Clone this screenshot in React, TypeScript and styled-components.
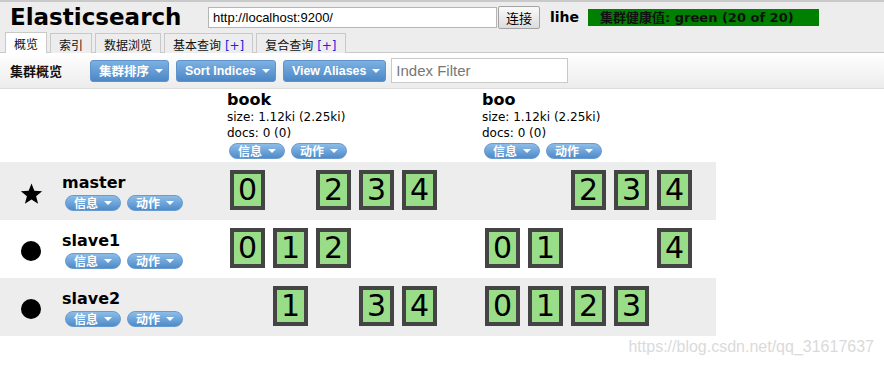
import styled, { createGlobalStyle } from "styled-components";

const GlobalStyle = createGlobalStyle`
	body {
		margin: 0;
		background: #fff;
		font-family: "DejaVu Sans", "Noto Sans CJK SC", sans-serif;
		font-size: 12px;
		color: #000;
	}
`;

const cjk = `"Noto Sans CJK SC", sans-serif`;

type Shards = (number | null)[];

const indices = [
	{ name: "book", size: "1.12ki (2.25ki)", docs: "0 (0)" },
	{ name: "boo", size: "1.12ki (2.25ki)", docs: "0 (0)" },
];

const nodes: { name: string; master: boolean; shards: Shards[] }[] = [
	{ name: "master", master: true, shards: [[0, null, 2, 3, 4], [null, null, 2, 3, 4]] },
	{ name: "slave1", master: false, shards: [[0, 1, 2, null, null], [0, 1, null, null, 4]] },
	{ name: "slave2", master: false, shards: [[null, 1, null, 3, 4], [0, 1, 2, 3, null]] },
];

const tabs = [
	{ label: "概览", active: true },
	{ label: "索引" },
	{ label: "数据浏览" },
	{ label: "基本查询", plus: true },
	{ label: "复合查询", plus: true },
];

const Caret = () => <Arrow />;

const Pill = ({ label }: { label: string }) => (
	<PillButton>
		{label}
		<Caret />
	</PillButton>
);

const Star = () => (
	<svg width="23" height="23" viewBox="0 0 24 24">
		<path
			d="M12 1.5l3 7.6 8.1.5-6.3 5.2 2.1 7.9L12 18.3l-6.9 4.4 2.1-7.9L.9 9.6 9 9.1z"
			fill="#000"
		/>
	</svg>
);

export default function App() {
	return (
		<Page>
			<GlobalStyle />
			<Header>
				<TopBar>
					<Title>Elasticsearch</Title>
					<UrlInput defaultValue="http://localhost:9200/" />
					<ConnectButton>连接</ConnectButton>
					<ClusterName>lihe</ClusterName>
					<Health>集群健康值: green (20 of 20)</Health>
				</TopBar>
				<Tabs>
					{tabs.map((t) => (
						<Tab key={t.label} $active={!!t.active}>
							{t.label}
							{t.plus && <Plus> [+]</Plus>}
						</Tab>
					))}
				</Tabs>
			</Header>
			<Toolbar>
				<ToolbarTitle>集群概览</ToolbarTitle>
				<Buttons>
					<ToolButton $cjk>
						集群排序
						<Caret />
					</ToolButton>
					<ToolButton>
						Sort Indices
						<Caret />
					</ToolButton>
					<ToolButton>
						View Aliases
						<Caret />
					</ToolButton>
				</Buttons>
				<FilterInput placeholder="Index Filter" />
			</Toolbar>
			<Overview>
				<HeadCell />
				{indices.map((idx) => (
					<HeadCell key={idx.name}>
						<IndexName>{idx.name}</IndexName>
						<Stat>size: {idx.size}</Stat>
						<Stat>docs: {idx.docs}</Stat>
						<PillRow>
							<Pill label="信息" />
							<Pill label="动作" />
						</PillRow>
					</HeadCell>
				))}
				{nodes.map((node, r) => (
					<Row key={node.name} $shaded={r % 2 === 0}>
						<NodeCell>
							<NodeIcon>{node.master ? <Star /> : <Dot />}</NodeIcon>
							<NodeInfo>
								<NodeName>{node.name}</NodeName>
								<PillRow $indent>
									<Pill label="信息" />
									<Pill label="动作" />
								</PillRow>
							</NodeInfo>
						</NodeCell>
						{node.shards.map((list, i) => (
							<ShardCell key={i}>
								{list.map((s, j) => (
									<Shard key={j} $empty={s === null}>
										{s ?? j}
									</Shard>
								))}
							</ShardCell>
						))}
					</Row>
				))}
			</Overview>
			<Watermark>https://blog.csdn.net/qq_31617637</Watermark>
		</Page>
	);
}

const Page = styled.div`
	position: relative;
	min-height: 366px;
`;

const Header = styled.div`
	background: #ededed;
	border-top: 2px solid #c9c9c9;
`;

const TopBar = styled.div`
	display: flex;
	align-items: center;
	height: 30px;
	padding-left: 10px;
`;

const Title = styled.h1`
	margin: 0 26px 0 0;
	width: 172px;
	font: bold 23px "DejaVu Sans", sans-serif;
	white-space: nowrap;
`;

const UrlInput = styled.input`
	box-sizing: border-box;
	width: 289px;
	height: 21px;
	margin: 0;
	padding: 0 4px;
	border: 1px solid #b5b5b5;
	background: #fff;
	font: 13px "Liberation Sans", sans-serif;
	color: #000;
	outline: none;
`;

const ConnectButton = styled.button`
	box-sizing: border-box;
	width: 42px;
	height: 23px;
	margin: 0 0 0 1px;
	padding: 0;
	border: 1px solid #a3a3a3;
	border-radius: 2px;
	background: linear-gradient(#fafafa, #dcdcdc);
	font: 13px ${cjk};
	color: #000;
`;

const ClusterName = styled.span`
	margin-left: 10px;
	font: bold 14px "DejaVu Sans", sans-serif;
`;

const Health = styled.span`
	box-sizing: border-box;
	width: 231px;
	height: 17px;
	margin-left: 9px;
	padding-left: 12px;
	background: #008000;
	font: bold 13px "DejaVu Sans", ${cjk};
	line-height: 17px;
	color: #111;
	white-space: nowrap;
	overflow: hidden;
`;

const Tabs = styled.div`
	display: flex;
	gap: 3px;
	padding-left: 5px;
	height: 20px;
	align-items: flex-end;
`;

const Tab = styled.div<{ $active: boolean }>`
	box-sizing: border-box;
	height: ${({ $active }) => ($active ? "21px" : "20px")};
	padding: 0 8px;
	margin-bottom: -1px;
	border: 1px solid #c9c9c9;
	border-bottom: none;
	background: ${({ $active }) => ($active ? "#fff" : "#ededed")};
	font: 12px ${cjk};
	line-height: 21px;
	color: #111;
	position: relative;
	z-index: 1;
`;

const Plus = styled.span`
	color: #2222dd;
	font-family: "DejaVu Sans", sans-serif;
`;

const Toolbar = styled.div`
	display: flex;
	align-items: center;
	height: 35px;
	padding-left: 10px;
	border-top: 1px solid #c9c9c9;
	border-bottom: 1px solid #dcdcdc;
	background: linear-gradient(#fff, #ececec);
`;

const ToolbarTitle = styled.span`
	width: 80px;
	font: bold 13px ${cjk};
	color: #111;
`;

const Buttons = styled.div`
	display: flex;
	gap: 7px;
`;

const ToolButton = styled.button<{ $cjk?: boolean }>`
	box-sizing: border-box;
	display: flex;
	align-items: center;
	height: 22px;
	margin: 0;
	padding: 0 5px 0 8px;
	border: 1px solid #5f93c9;
	border-radius: 3px;
	background: linear-gradient(#7cb1e2, #4c87c6);
	font: bold ${({ $cjk }) => ($cjk ? `12.5px ${cjk}` : `12.4px "Liberation Sans", sans-serif`)};
	color: #fff;
	white-space: nowrap;
`;

const Arrow = styled.span`
	display: inline-block;
	margin-left: 6px;
	border-left: 4px solid transparent;
	border-right: 4px solid transparent;
	border-top: 4px solid #fff;
`;

const FilterInput = styled.input`
	box-sizing: border-box;
	width: 177px;
	height: 25px;
	margin: 0 0 0 5px;
	padding: 0 4px;
	border: 1px solid #c9c9c9;
	background: #fff;
	font: 15px "Liberation Sans", sans-serif;
	outline: none;
	&::placeholder {
		color: #777;
	}
`;

const Overview = styled.div`
	display: grid;
	grid-template-columns: 227px 255px 234px;
	width: 716px;
`;

const HeadCell = styled.div`
	height: 73px;
	padding-top: 1px;
	box-sizing: border-box;
`;

const IndexName = styled.div`
	font: bold 16px "DejaVu Sans", sans-serif;
	line-height: 19px;
`;

const Stat = styled.div`
	font: 12px "DejaVu Sans", sans-serif;
	line-height: 16px;
`;

const PillRow = styled.div<{ $indent?: boolean }>`
	display: flex;
	gap: 6px;
	margin: 2px 0 0 ${({ $indent }) => ($indent ? "3px" : "2px")};
`;

const PillButton = styled.span`
	box-sizing: border-box;
	display: inline-flex;
	align-items: center;
	justify-content: center;
	width: 56px;
	height: 16px;
	border: 1px solid #6a9bd0;
	border-radius: 8px;
	background: linear-gradient(#8dbde8, #4f8bc9);
	font: bold 12px ${cjk};
	line-height: 16px;
	color: #fff;
`;

const Row = styled.div<{ $shaded: boolean }>`
	display: contents;
	& > div {
		background: ${({ $shaded }) => ($shaded ? "#ededed" : "#fff")};
	}
`;

const NodeCell = styled.div`
	display: flex;
	align-items: center;
	height: 58px;
`;

const NodeIcon = styled.div`
	display: flex;
	align-items: center;
	justify-content: center;
	width: 62px;
	padding-top: 4px;
`;

const Dot = styled.span`
	display: block;
	width: 20px;
	height: 20px;
	margin-right: 1px;
	border-radius: 50%;
	background: #000;
`;

const NodeInfo = styled.div`
	display: flex;
	flex-direction: column;
	padding-top: 1px;
`;

const NodeName = styled.div`
	font: bold 16px "DejaVu Sans", sans-serif;
	line-height: 20px;
`;

const ShardCell = styled.div`
	display: flex;
	align-items: center;
	gap: 8px;
	height: 58px;
	padding: 0 0 3px 3px;
	box-sizing: border-box;
`;

const Shard = styled.div<{ $empty: boolean }>`
	box-sizing: border-box;
	width: 35px;
	height: 40px;
	border: 4px solid #444;
	background: #99dd88;
	font: 30px "DejaVu Sans", sans-serif;
	line-height: 32px;
	text-align: center;
	color: #000;
	visibility: ${({ $empty }) => ($empty ? "hidden" : "visible")};
`;

const Watermark = styled.div`
	position: absolute;
	top: 338px;
	right: 10px;
	font: 16px "Liberation Sans", sans-serif;
	color: #dadada;
	white-space: nowrap;
`;
